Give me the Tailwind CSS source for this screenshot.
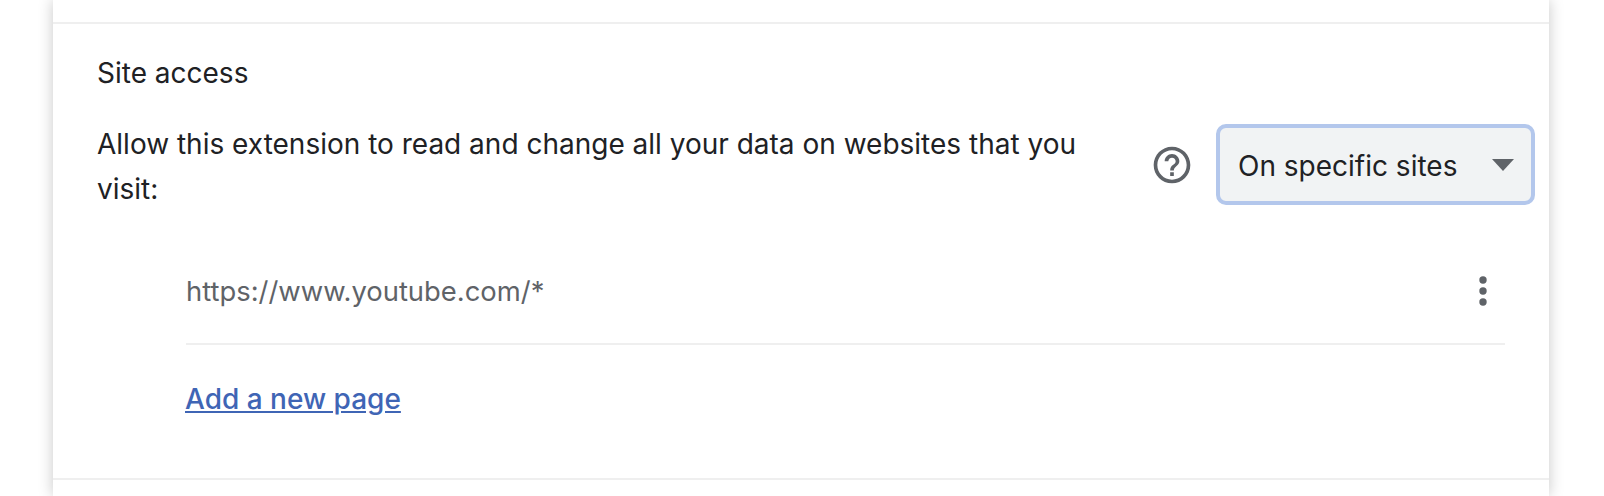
<!DOCTYPE html>
<html lang="en">
<head>
   <meta charset="UTF-8">
   <script src="https://cdn.jsdelivr.net/npm/@tailwindcss/browser@4"></script>
   <title>Site access</title>
</head>
<body class="bg-white w-[1604px] h-[496px] overflow-hidden font-['Inter','Liberation_Sans',sans-serif] text-[#202124]">
   <div class="w-[1496px] h-[496px] ml-[53px] bg-white shadow-[0_0_14px_rgba(0,0,0,0.22)]">
      <div class="h-[22px]"></div>
      <div class="h-[2px] bg-[#efefef]"></div>
      <div class="h-[454px] pl-[44px] pr-[14px]">
         <div class="pt-[31px] text-[28px] leading-[36px]">Site access</div>
         <div class="flex items-start mt-[31px]">
            <div class="w-[999px] shrink-0 text-[28px] leading-[45px]">Allow this extension to read and change all your data on websites that you visit:</div>
            <svg class="ml-[54px] mt-[21px] shrink-0 w-[44px] h-[44px] text-[#5f6368]" viewBox="0 0 24 24" fill="currentColor"><path d="M11 18h2v-2h-2v2zm1-16C6.48 2 2 6.48 2 12s4.48 10 10 10 10-4.48 10-10S17.52 2 12 2zm0 18c-4.41 0-8-3.59-8-8s3.59-8 8-8 8 3.590 8 8-3.59 8-8 8zm0-14c-2.21 0-4 1.790-4 4h2c0-1.100.9-2 2-2s2 .9 2 2c0 2-3 1.750-3 5h2c0-2.250 3-2.500 3-5 0-2.210-1.790-4-4-4z"/></svg>
            <div class="ml-[22px] mt-[2px] shrink-0 w-[319px] h-[81px] flex items-center justify-between pl-[18px] pr-[17px] rounded-[10px] border-[4px] border-[#b3c7ec] bg-[#f1f3f4] text-[28px]">
               <span class="pt-[3px]">On specific sites</span>
               <svg class="w-[22px] h-[12px]" viewBox="0 0 22 12" fill="#5f6368"><path d="M0 0h22L11 12z"/></svg>
            </div>
         </div>
         <div class="ml-[89px] mr-[30px] mt-[33px] h-[100px] pb-[7px] flex items-center justify-between border-b-2 border-[#efefef] text-[#5f6368] text-[27.4px]">
            <span class="pt-[2px]">https://www.youtube.com/*</span>
            <svg class="w-[8px] h-[30px] mr-[18px]" viewBox="0 0 8 30" fill="#5f6368"><circle cx="4" cy="4" r="3.700"/><circle cx="4" cy="15" r="3.700"/><circle cx="4" cy="26" r="3.700"/></svg>
         </div>
         <div class="ml-[88px] mt-[36px] text-[28px] leading-[36px]"><a href="#" class="text-[#3f65b5] underline font-medium">Add a new page</a></div>
      </div>
      <div class="h-[2px] bg-[#efefef]"></div>
   </div>
</body>
</html>
